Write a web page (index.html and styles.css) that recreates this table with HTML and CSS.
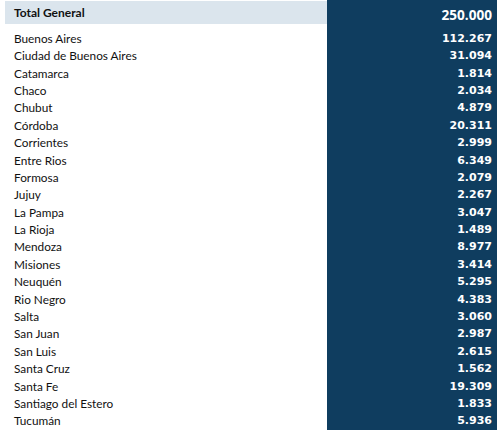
FILE: index.html
```html
<!DOCTYPE html>
<html lang="es">
<head>
  <meta charset="UTF-8">
  <title>Total General</title>
  <link rel="stylesheet" href="styles.css">
</head>
<body>
  <div class="sheet">
    <div class="head-name">Total General</div>
    <div class="head-value">250.000</div>

    <div class="name">Buenos Aires</div><div class="value">112.267</div>
    <div class="name">Ciudad de Buenos Aires</div><div class="value">31.094</div>
    <div class="name">Catamarca</div><div class="value">1.814</div>
    <div class="name">Chaco</div><div class="value">2.034</div>
    <div class="name">Chubut</div><div class="value">4.879</div>
    <div class="name">Córdoba</div><div class="value">20.311</div>
    <div class="name">Corrientes</div><div class="value">2.999</div>
    <div class="name">Entre Rios</div><div class="value">6.349</div>
    <div class="name">Formosa</div><div class="value">2.079</div>
    <div class="name">Jujuy</div><div class="value">2.267</div>
    <div class="name">La Pampa</div><div class="value">3.047</div>
    <div class="name">La Rioja</div><div class="value">1.489</div>
    <div class="name">Mendoza</div><div class="value">8.977</div>
    <div class="name">Misiones</div><div class="value">3.414</div>
    <div class="name">Neuquén</div><div class="value">5.295</div>
    <div class="name">Rio Negro</div><div class="value">4.383</div>
    <div class="name">Salta</div><div class="value">3.060</div>
    <div class="name">San Juan</div><div class="value">2.987</div>
    <div class="name">San Luis</div><div class="value">2.615</div>
    <div class="name">Santa Cruz</div><div class="value">1.562</div>
    <div class="name">Santa Fe</div><div class="value">19.309</div>
    <div class="name">Santiago del Estero</div><div class="value">1.833</div>
    <div class="name">Tucumán</div><div class="value">5.936</div>
  </div>
</body>
</html>
```

FILE: styles.css
```css
body{
  margin: 0;
  background-color: white;
}

.sheet{
  display: grid;
  grid-template-columns: 322px 170px;
  grid-template-rows: 29.8px;
  grid-auto-rows: 17.4px;
  margin-left: 5px;
  font-family: Lato, "Open Sans", sans-serif;
  color: #111;
}

.head-name, .head-value{
  grid-row: 1;
  align-self: start;
}
.head-name{
  height: 23px;
  margin-top: 1px;
  padding-left: 9px;
  background-color: #dbe5ed;
  font-weight: bold;
  font-size: 12px;
  line-height: 24px;
}
.head-value{
  height: 29.8px;
  padding-right: 5px;
  text-align: right;
  background-color: #0f3d5f;
  color: white;
  font-family: "Open Sans", sans-serif;
  font-weight: bold;
  font-size: 13.6px;
  line-height: 30px;
}

.name{
  padding-left: 9px;
  font-size: 11.8px;
  line-height: 17.4px;
}
.value{
  padding-right: 5px;
  text-align: right;
  background-color: #0f3d5f;
  color: white;
  font-family: "DejaVu Sans", sans-serif;
  font-weight: bold;
  font-size: 11px;
  line-height: 17.4px;
}
```
